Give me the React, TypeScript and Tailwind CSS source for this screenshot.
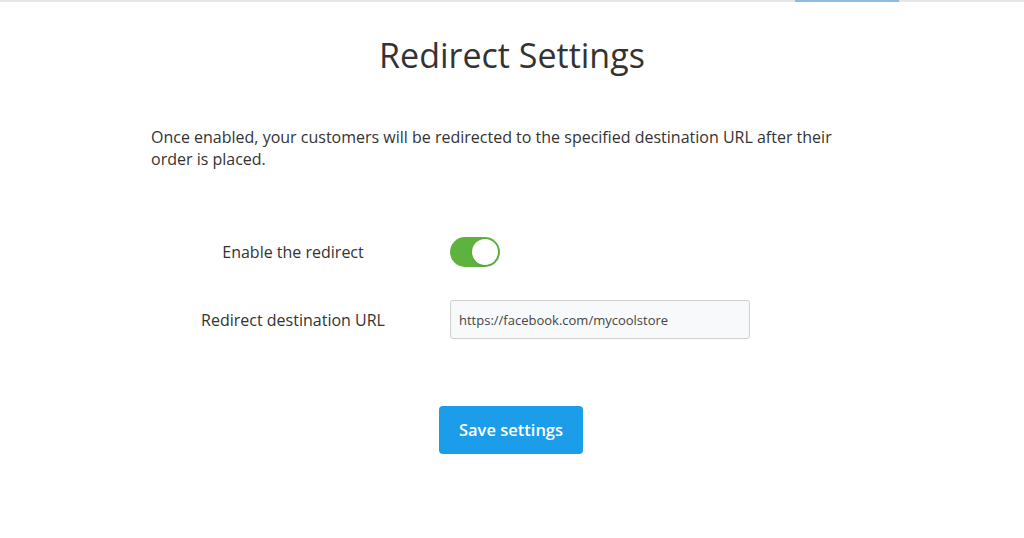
import React from "react";

export default function App() {
  return (
    <div className="w-[1024px] h-[538px] bg-white overflow-hidden" style={{ fontFamily: '"Open Sans", sans-serif' }}>
      <div className="relative h-[2px] bg-[#e6e6e6]">
        <div className="absolute left-[795px] top-0 h-[2px] w-[104px] bg-[#8bbbe3]" />
      </div>
      <div className="w-[722px] mx-auto">
        <h1 className="text-center text-[34px] leading-[44px] text-[#333] pt-[31px]">Redirect Settings</h1>
        <p className="mt-[49px] text-[16px] leading-[22px] text-[#333]">
          Once enabled, your customers will be redirected to the specified destination URL after their order is placed.
        </p>
        <div className="mt-[67px] flex items-center h-[30px]">
          <div className="w-[284px] text-center text-[16px] text-[#333]">Enable the redirect</div>
          <div className="ml-[15px] w-[50px] h-[30px] rounded-full bg-[#5eb33f] flex items-center justify-end pr-[2px]">
            <div className="w-[26px] h-[26px] rounded-full bg-white shadow-sm" />
          </div>
        </div>
        <div className="mt-[33px] flex items-center">
          <div className="w-[284px] text-center text-[16px] text-[#333]">Redirect destination URL</div>
          <input
            readOnly
            value="https://facebook.com/mycoolstore"
            className="ml-[15px] w-[300px] h-[39px] border border-[#d0d0d0] rounded-[3px] bg-[#f8f9fb] px-[8px] text-[13px] text-[#444] outline-none"
            style={{ fontFamily: '"Open Sans", sans-serif' }}
          />
        </div>
        <div className="mt-[67px] flex justify-center">
          <button className="ml-[-2px] w-[144px] h-[48px] rounded-[4px] bg-[#1b9de9] text-white text-[16.5px] font-semibold">
            Save settings
          </button>
        </div>
      </div>
    </div>
  );
}
